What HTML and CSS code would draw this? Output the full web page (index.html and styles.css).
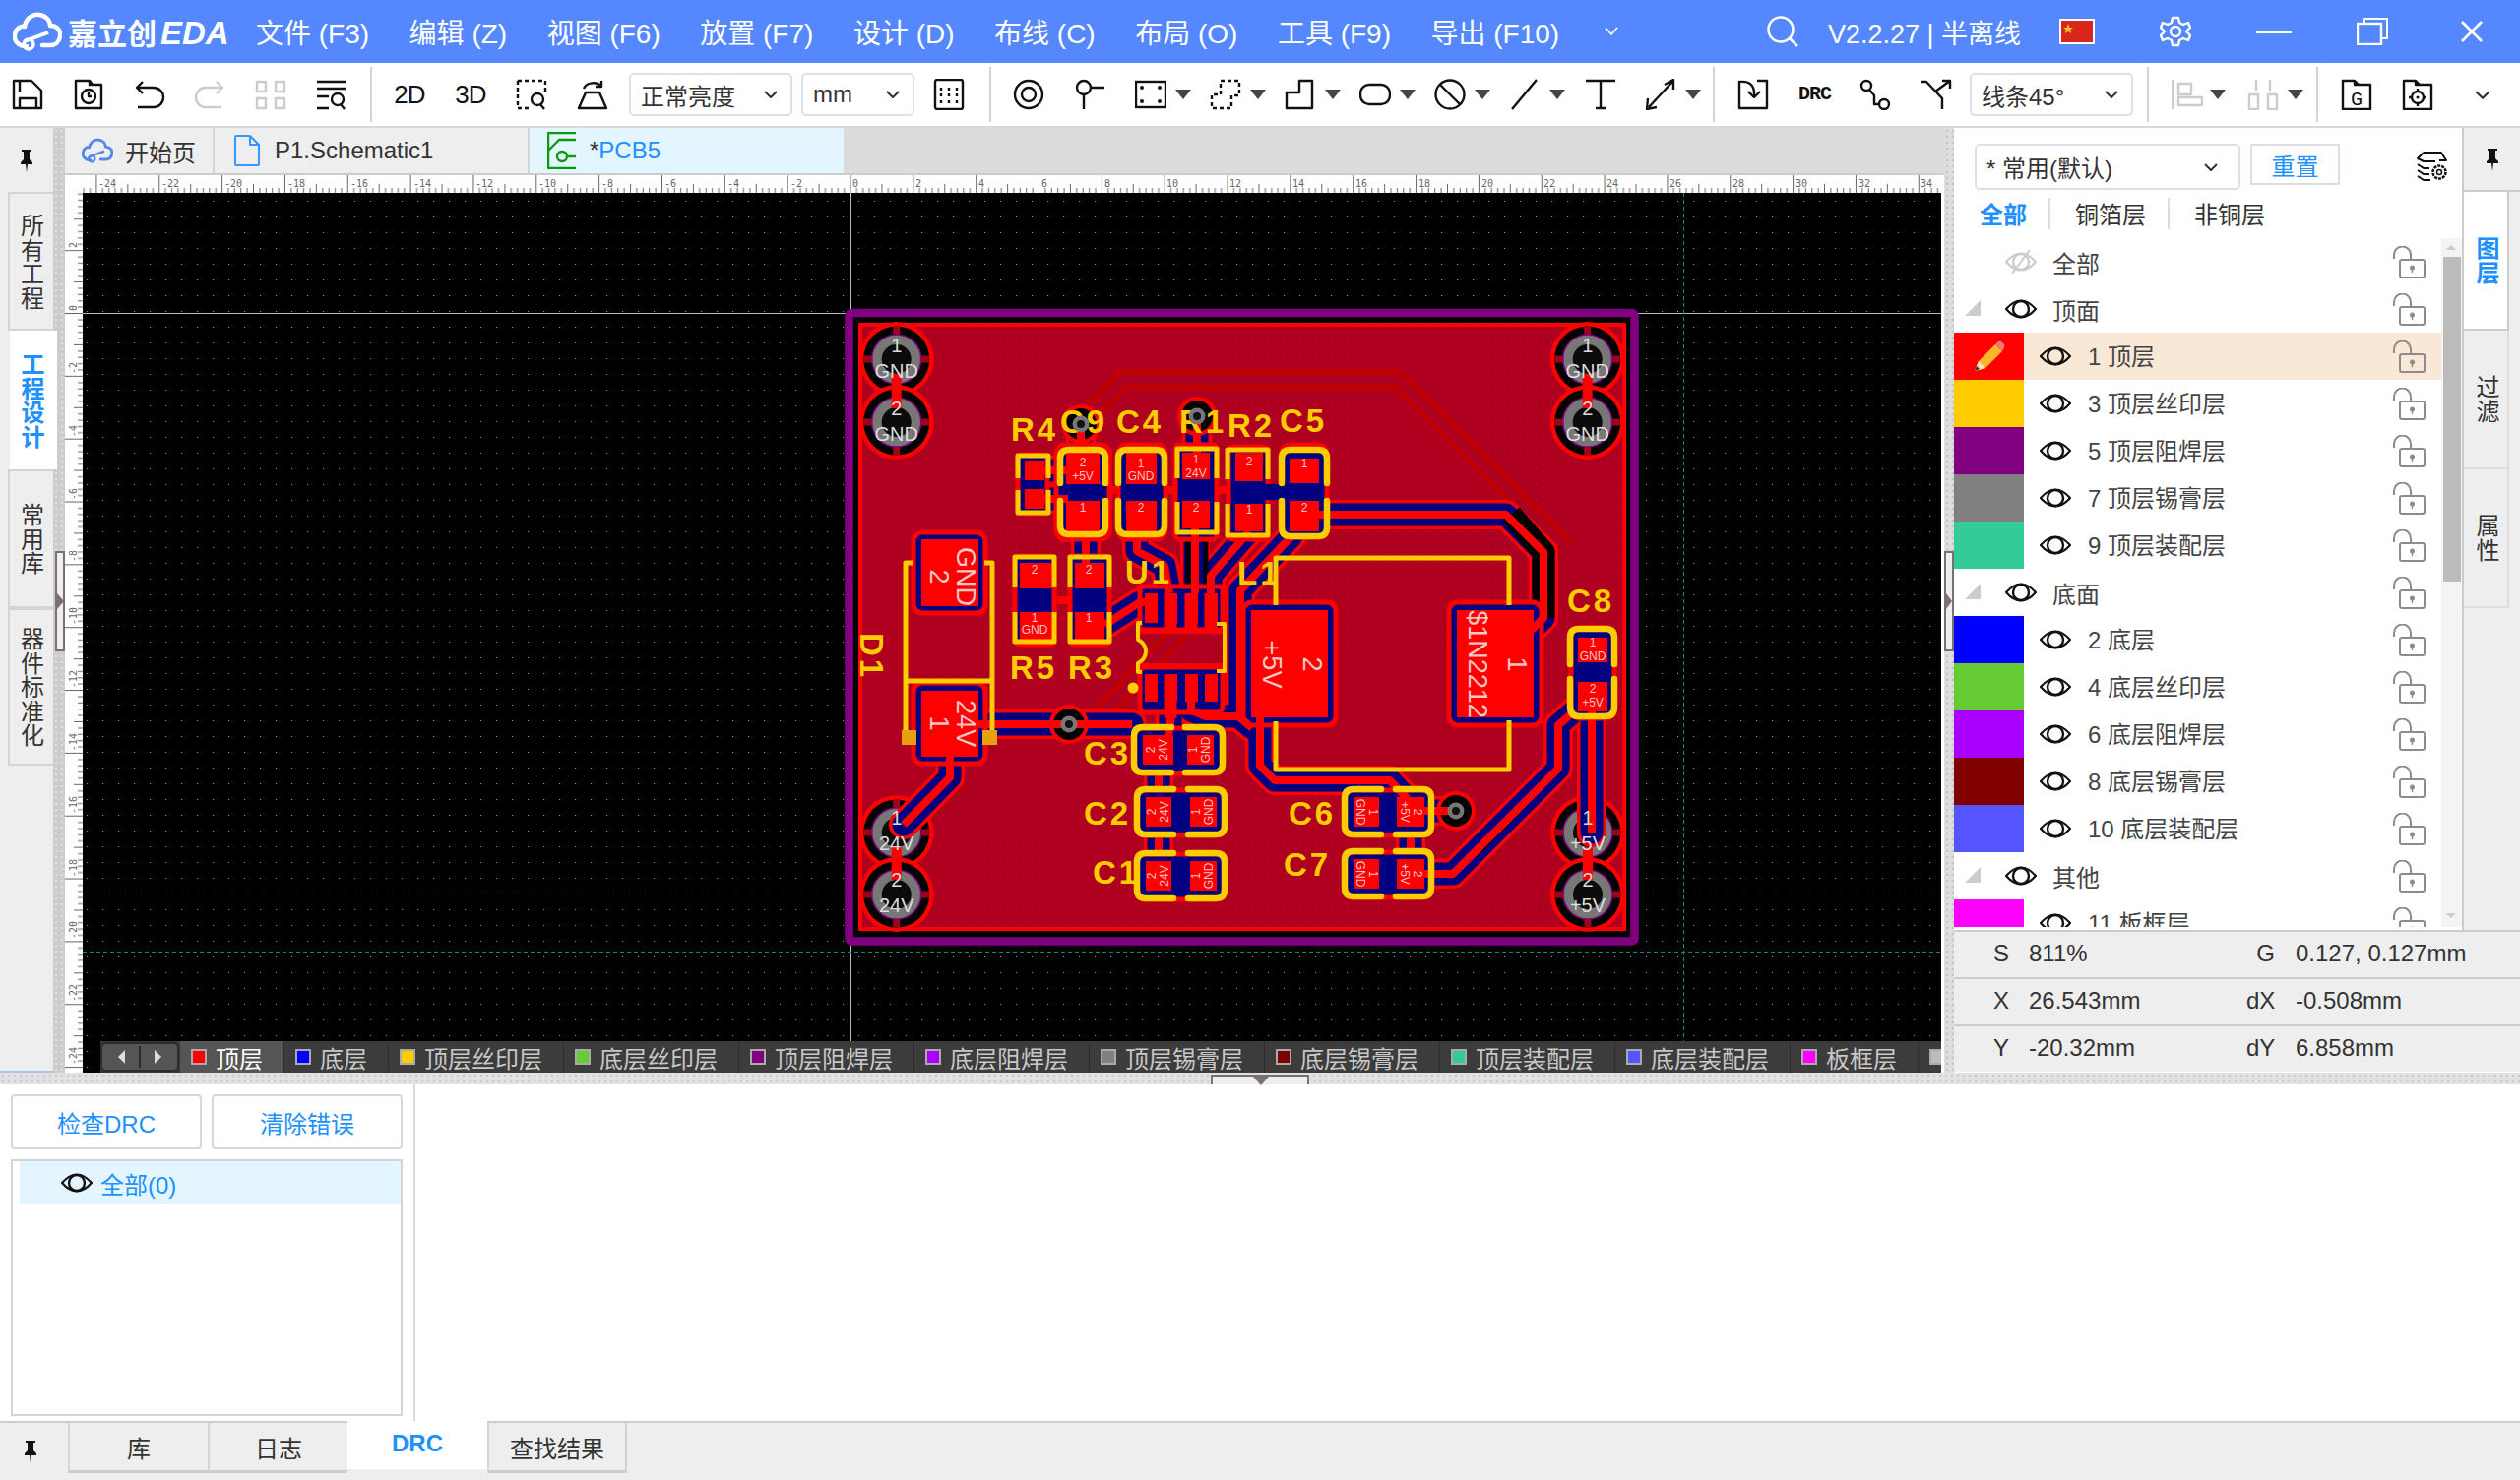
FILE: index.html
```html
<!DOCTYPE html>
<html lang="zh-CN">
<head>
<meta charset="utf-8">
<title>嘉立创EDA</title>
<link rel="stylesheet" href="styles.css">
</head>
<body>
<svg class="defs" width="0" height="0" aria-hidden="true">
  <symbol id="cloud" viewBox="0 0 50 40"><path d="M14 35 C5 35 1 29 2 23 C3 17 8 14 12 15 C13 7 20 2 27 3 C34 4 38 9 38 14 C45 14 49 19 48 25 C47 31 43 34 38 34 L30 34" fill="none" stroke="currentColor" stroke-width="4.5" stroke-linecap="round"/><path d="M12 30 L36 21" fill="none" stroke="currentColor" stroke-width="4"/><circle cx="16" cy="33" r="5" fill="none" stroke="currentColor" stroke-width="3.5"/></symbol>
  <symbol id="eye" viewBox="0 0 32 24"><path d="M1 12 Q16 -5 31 12 Q16 29 1 12Z" fill="none" stroke="currentColor" stroke-width="2.2"/><circle cx="16" cy="12" r="8" fill="none" stroke="currentColor" stroke-width="2.4"/></symbol>
  <symbol id="lock" viewBox="0 0 33 33"><path d="M1 13 V9 a8.500 8.500 0 0 1 17 0 V13" fill="none" stroke="#8c8c8c" stroke-width="2"/><rect x="7" y="14" width="25" height="18" rx="2" fill="none" stroke="#8c8c8c" stroke-width="2"/><circle cx="19.500" cy="22" r="2.500" fill="#8c8c8c"/><path d="M19.500 22 V27" stroke="#8c8c8c" stroke-width="1.500"/></symbol>
  <symbol id="pin" viewBox="0 0 16 24"><path d="M3 1 H13 V3 H11 V11 L14 14 V16 H9 L8 24 L7 16 H2 V14 L5 11 V3 H3Z" fill="#111"/></symbol>
  <symbol id="chev" viewBox="0 0 16 10"><path d="M2 2 L8 8 L14 2" fill="none" stroke="#333" stroke-width="2"/></symbol>
</svg>

<header class="titlebar">
  <div class="logo">
    <svg class="logo-icon" viewBox="0 0 50 40"><use href="#cloud"/></svg>
    <span class="logo-text">嘉立创<i>EDA</i></span>
  </div>
  <nav class="menu">
    <span>文件 (F3)</span><span>编辑 (Z)</span><span>视图 (F6)</span><span>放置 (F7)</span><span>设计 (D)</span><span>布线 (C)</span><span>布局 (O)</span><span>工具 (F9)</span><span>导出 (F10)</span>
    <svg class="menu-more" viewBox="0 0 16 10"><path d="M2 1 L8 8 L14 1" fill="none" stroke="#fff" stroke-width="1.800"/></svg>
  </nav>
  <div class="title-right">
    <svg class="ti search" viewBox="0 0 34 34"><circle cx="15" cy="15" r="12.500" fill="none" stroke="#fff" stroke-width="2.500"/><path d="M24 24 L32 32" stroke="#fff" stroke-width="2.500"/></svg>
    <span class="version">V2.2.27 | 半离线</span>
    <svg class="flag" viewBox="0 0 36 26"><rect x="1" y="1" width="34" height="24" fill="#d9261c" stroke="#fff" stroke-width="2"/><path d="M9 5 L10.500 9 L14 9 L11 11.500 L12.500 15 L9 13 L5.500 15 L7 11.500 L4 9 L7.500 9Z" fill="#f4c430"/></svg>
    <svg class="ti gear" viewBox="0 0 32 32"><path d="M13 2 H19 L20 7 L24 9 L29 7 L31 12 L27 16 L31 20 L29 25 L24 23 L20 25 L19 30 H13 L12 25 L8 23 L3 25 L1 20 L5 16 L1 12 L3 7 L8 9 L12 7Z" fill="none" stroke="#fff" stroke-width="2.400" stroke-linejoin="round"/><circle cx="16" cy="16" r="5" fill="none" stroke="#fff" stroke-width="2.400"/></svg>
    <span class="win-min"></span>
    <svg class="ti win-max" viewBox="0 0 32 28"><path d="M8 6 V1 H31 V21 H25" fill="none" stroke="#fff" stroke-width="2"/><rect x="1" y="6" width="24" height="21" fill="none" stroke="#fff" stroke-width="2.400"/></svg>
    <svg class="ti win-close" viewBox="0 0 22 22"><path d="M1 1 L21 21 M21 1 L1 21" stroke="#fff" stroke-width="2.600"/></svg>
  </div>
</header>

<div class="toolbar">
  <div class="tg g1">
    <svg class="ic" viewBox="0 0 32 32"><path d="M2 2 H20 L30 12 V30 H2Z M8 30 V20 H25 V30 M8 2 V13" class="ln"/></svg>
    <svg class="ic" viewBox="0 0 32 32"><path d="M3 2 H17 L20 6 H29 V30 H3Z M17 2 V6 H20" class="ln"/><circle cx="16" cy="18" r="7" class="ln"/><path d="M16 13 V18 H19" class="ln"/></svg>
    <svg class="ic" viewBox="0 0 32 32"><path d="M3 9 H20 A10 10 0 0 1 20 29 H4 M9 3 L3 9 L9 15" class="ln"/></svg>
    <svg class="ic" viewBox="0 0 32 32"><path d="M29 9 H12 A10 10 0 0 0 12 29 H28 M23 3 L29 9 L23 15" class="ln gr"/></svg>
    <svg class="ic" viewBox="0 0 32 32"><path d="M2 3 H11 V13 H2Z M21 3 H30 V13 H21Z M2 20 H11 V30 H2Z M21 20 H30 V30 H21Z" class="ln gr"/></svg>
    <svg class="ic" viewBox="0 0 32 32"><path d="M1 3 H31 M1 10 H31 M1 18 H13 M1 30 H13" class="ln"/><circle cx="22" cy="21" r="6" class="ln"/><path d="M25 26 L29 31" class="ln"/></svg>
  </div>
  <span class="sep s1"></span>
  <div class="tg g2">
    <span class="ic tx">2D</span>
    <span class="ic tx">3D</span>
    <svg class="ic" viewBox="0 0 32 32"><path d="M2 2 H30 V14 M2 2 V30 H14" class="ln dash"/><circle cx="22" cy="21" r="6" class="ln"/><path d="M25 26 L29 31" class="ln"/></svg>
    <svg class="ic" viewBox="0 0 32 32"><path d="M9 14 H23 L30 30 H2Z" class="ln"/><path d="M7 10 A10 8 0 0 1 25 8 M25 2 V8 H19" class="ln"/></svg>
  </div>
  <div class="sel sel-bright"><span>正常亮度</span><svg class="chev"><use href="#chev"/></svg></div>
  <div class="sel sel-unit"><span>mm</span><svg class="chev"><use href="#chev"/></svg></div>
  <svg class="ic m-grid" viewBox="0 0 32 32"><rect x="2" y="1" width="28" height="30" rx="2" class="ln"/><path d="M8 9 V12 M16 9 V12 M24 9 V12 M8 15 V18 M16 15 V18 M24 15 V18 M8 22 V25 M16 22 V25 M24 22 V25" class="ln"/></svg>
  <span class="sep s2"></span>
  <svg class="ic m-ring" viewBox="0 0 32 32"><circle cx="16" cy="16" r="14" class="ln"/><circle cx="16" cy="16" r="7" class="ln"/></svg>
  <svg class="ic m-probe" viewBox="0 0 32 32"><circle cx="9" cy="9" r="7" class="ln"/><path d="M16 9 H30 M9 16 V31" class="ln"/></svg>
  <div class="drop m-pad"><svg class="ic" viewBox="0 0 32 32"><rect x="1" y="3" width="30" height="26" class="ln"/><circle cx="7" cy="9" r="2"/><circle cx="25" cy="9" r="2"/><circle cx="7" cy="23" r="2"/><circle cx="25" cy="23" r="2"/></svg><span class="tri"></span></div>
  <div class="drop"><svg class="ic" viewBox="0 0 32 32"><path d="M11 2 H30 V17 H22 V30 H2 V16 H11Z" class="ln dash"/></svg><span class="tri"></span></div>
  <div class="drop"><svg class="ic" viewBox="0 0 32 32"><path d="M15 2 H28 V30 H2 V14 H15Z" class="ln"/></svg><span class="tri"></span></div>
  <div class="drop"><svg class="ic" viewBox="0 0 32 32"><rect x="1" y="6" width="30" height="20" rx="9" class="ln"/></svg><span class="tri"></span></div>
  <div class="drop"><svg class="ic" viewBox="0 0 32 32"><circle cx="16" cy="16" r="14.500" class="ln"/><path d="M6 6 L26 26" class="ln"/></svg><span class="tri"></span></div>
  <div class="drop"><svg class="ic" viewBox="0 0 32 32"><path d="M3 31 L28 1" class="ln"/></svg><span class="tri"></span></div>
  <svg class="ic m-text" viewBox="0 0 32 32"><path d="M1 2 H31 M16 2 V30 M11 30 H21" class="ln"/></svg>
  <div class="drop m-measure"><svg class="ic" viewBox="0 0 32 32"><path d="M4 29 L28 3 M20 6 L29 1 L29 11 M3 20 L2 31 L12 29" class="ln"/></svg><span class="tri"></span></div>
  <span class="sep s3"></span>
  <div class="tg g3">
    <svg class="ic" viewBox="0 0 32 32"><path d="M20 2 H30 V30 H2 V2" class="ln"/><path d="M2 3 C12 2 18 6 17 18 M11 13 L17 19 L23 13" class="ln"/></svg>
    <span class="ic tx tx-drc">DRC</span>
    <svg class="ic" viewBox="0 0 32 32"><circle cx="7" cy="7" r="5" class="ln"/><circle cx="25" cy="26" r="5" class="ln"/><path d="M10 11 L15 17 V26 H20" class="ln"/></svg>
    <svg class="ic" viewBox="0 0 32 32"><path d="M1 3 H6 L22 20 V31 M15 13 L30 2 M22 2 H30 V10" class="ln"/></svg>
  </div>
  <div class="sel sel-line"><span>线条45°</span><svg class="chev"><use href="#chev"/></svg></div>
  <span class="sep s4"></span>
  <div class="drop m-align"><svg class="ic" viewBox="0 0 32 32"><path d="M1 1 V31 M7 5 H20 V16 H7Z M7 19 H31 V27 H7Z" class="ln gr"/></svg><span class="tri tri-a"></span></div>
  <div class="drop m-dist"><svg class="ic" viewBox="0 0 32 32"><path d="M9 1 V12 M23 1 V12 M2 16 H11 V31 H2Z M21 16 H30 V31 H21Z" class="ln gr"/></svg><span class="tri"></span></div>
  <span class="sep s5"></span>
  <svg class="ic m-g" viewBox="0 0 32 32"><path d="M2 2 H14 L18 6 H30 V31 H2Z M14 2 V6 H18" class="ln"/><text x="16" y="27" class="icon-g">G</text></svg>
  <svg class="ic m-t" viewBox="0 0 32 32"><path d="M2 2 H14 L18 6 H30 V31 H2Z M14 2 V6 H18" class="ln"/><circle cx="16" cy="19" r="6" class="ln"/><circle cx="16" cy="19" r="1.500"/><path d="M16 10 V13 M16 25 V28 M7 19 H10 M22 19 H25" class="ln"/></svg>
  <svg class="end-chev" viewBox="0 0 16 10"><use href="#chev"/></svg>
</div>

<main class="main">
  <aside class="side">
    <div class="side-pin"><svg class="pin"><use href="#pin"/></svg></div>
    <div class="vtab">所有工程</div>
    <div class="vtab on">工程设计</div>
    <div class="vtab">常用库</div>
    <div class="vtab last">器件标准化</div>
  </aside>
  <div class="vsplit"><span class="handle"><i class="arrow-r"></i></span></div>

  <section class="center">
    <div class="tabs">
      <div class="tab t1"><svg class="tab-cloud" viewBox="0 0 50 40"><use href="#cloud"/></svg><span>开始页</span></div>
      <div class="tab t2"><svg class="tab-ic" viewBox="0 0 26 32"><path d="M2 1 H16 L25 10 V30 a1 1 0 0 1 -1 1 H2 a1 1 0 0 1 -1 -1 V2 a1 1 0 0 1 1 -1Z M16 1 V10 H25" fill="none" stroke="#3399ff" stroke-width="2"/></svg><span>P1.Schematic1</span></div>
      <div class="tab t3"><svg class="tab-ic2" viewBox="0 0 30 38"><path d="M29 1 H1 V37 H29 M1 19 L12 8 H29" fill="none" stroke="#0a9a0a" stroke-width="2.400"/><circle cx="15" cy="25" r="5" fill="none" stroke="#0a9a0a" stroke-width="2.400"/><path d="M20 25 H29" stroke="#0a9a0a" stroke-width="2.400"/></svg><span><b>*</b>PCB5</span></div>
    </div>
    <div class="canvas">
      <svg class="board" width="1906" height="912" viewBox="66 178 1906 912">
        <defs>
          <pattern id="rt" x="863.500" y="178" width="63.840" height="18" patternUnits="userSpaceOnUse">
            <path d="M.5 0 V18 M6.880 13 V18 M13.270 13 V18 M19.650 13 V18 M26.040 13 V18 M32.420 9 V18 M38.800 13 V18 M45.190 13 V18 M51.570 13 V18 M57.960 13 V18" stroke="#666" fill="none"/>
          </pattern>
          <pattern id="rl" x="66" y="318" width="18" height="63.840" patternUnits="userSpaceOnUse">
            <path d="M0 .5 H18 M13 6.880 H18 M13 13.270 H18 M13 19.650 H18 M13 26.040 H18 M9 32.420 H18 M13 38.800 H18 M13 45.190 H18 M13 51.570 H18 M13 57.960 H18" stroke="#666" fill="none"/>
          </pattern>
          <pattern id="dots" x="88" y="204" width="16" height="16" patternUnits="userSpaceOnUse"><rect width="1" height="1" fill="#9a9a9a"/></pattern>
          <g id="hole">
            <circle r="38" fill="#f00"/><circle r="33.500" fill="#000"/>
            <path d="M-33 0 H33 M0 -33 V33" stroke="#a00018" stroke-width="7"/>
            <circle r="25" fill="#777" stroke="#800080" stroke-width="1.500"/><circle r="15" fill="#0b0b0b"/>
          </g>
          <g id="via"><circle r="20" fill="#f00"/><circle r="16" fill="#000"/></g>
          <g id="viatop"><circle r="8.500" fill="#777"/><circle r="4" fill="#111"/></g>
          <path id="t1" d="M1340 523 H1530 L1568 561 V628 L1556 640"/>
          <path id="t2" d="M1447 888 H1476 L1583 781 V737 L1600 722"/>
          <path id="t3" d="M1617 723 V846"/>
          <path id="t4" d="M1447 824 H1479"/>
          <path id="t5" d="M1433 851 V862"/>
          <path id="t6" d="M1280 729 V778 L1295 793 H1412 L1430 812"/>
          <path id="t7" d="M965 768 V790 L918 838"/>
          <path id="t8" d="M994 736 H1150"/>
          <path id="t9" d="M1122 635 L1130 630 L1158 612 H1170"/>
          <path id="t10" d="M1098 431 V460"/>
          <path id="t11" d="M1216 423 V460"/>
          <path id="t12" d="M1214 537 V603"/>
          <path id="t13" d="M1155 541 V560 L1183 575 L1188 603"/>
          <path id="t14" d="M1269 540 L1230 585 V603"/>
          <path id="t15" d="M1312 545 L1260 600 V725"/>
          <path id="t16" d="M1103 541 V572"/>
          <path id="t17" d="M1189 713 V740 L1185 752"/>
          <path id="t18" d="M1210 713 V722 L1225 728 H1258 L1272 740"/>
          <path id="t19" d="M1177 788 V799 M1177 851 V864"/>
          <path id="t20" d="M1061 478 H1083 M1061 507 H1085"/>
          <g id="tracks">
            <use href="#t1"/><use href="#t2"/><use href="#t3"/><use href="#t4"/><use href="#t5"/><use href="#t6"/><use href="#t7"/><use href="#t8"/><use href="#t9"/><use href="#t10"/><use href="#t11"/><use href="#t12"/><use href="#t13"/><use href="#t14"/><use href="#t15"/><use href="#t16"/><use href="#t17"/><use href="#t18"/><use href="#t19"/><use href="#t20"/>
          </g>
        </defs>

        <rect x="66" y="178" width="1906" height="912" fill="#fff"/>
        <rect x="84" y="178" width="1888" height="18" fill="url(#rt)"/>
        <rect x="66" y="196" width="18" height="894" fill="url(#rl)"/>
        <g class="ruler">
          <text x="100" y="190">-24</text><text x="164" y="190">-22</text><text x="228" y="190">-20</text><text x="292" y="190">-18</text><text x="356" y="190">-16</text><text x="420" y="190">-14</text><text x="483" y="190">-12</text><text x="547" y="190">-10</text><text x="611" y="190">-8</text><text x="675" y="190">-6</text><text x="739" y="190">-4</text><text x="803" y="190">-2</text><text x="866" y="190">0</text><text x="930" y="190">2</text><text x="994" y="190">4</text><text x="1058" y="190">6</text><text x="1122" y="190">8</text><text x="1185" y="190">10</text><text x="1249" y="190">12</text><text x="1313" y="190">14</text><text x="1377" y="190">16</text><text x="1441" y="190">18</text><text x="1505" y="190">20</text><text x="1568" y="190">22</text><text x="1632" y="190">24</text><text x="1696" y="190">26</text><text x="1760" y="190">28</text><text x="1824" y="190">30</text><text x="1888" y="190">32</text><text x="1951" y="190">34</text>
          <text transform="rotate(-90 78 252)" x="78" y="252">2</text><text transform="rotate(-90 78 316)" x="78" y="316">0</text><text transform="rotate(-90 78 380)" x="78" y="380">-2</text><text transform="rotate(-90 78 444)" x="78" y="444">-4</text><text transform="rotate(-90 78 508)" x="78" y="508">-6</text><text transform="rotate(-90 78 571)" x="78" y="571">-8</text><text transform="rotate(-90 78 635)" x="78" y="635">-10</text><text transform="rotate(-90 78 699)" x="78" y="699">-12</text><text transform="rotate(-90 78 763)" x="78" y="763">-14</text><text transform="rotate(-90 78 827)" x="78" y="827">-16</text><text transform="rotate(-90 78 891)" x="78" y="891">-18</text><text transform="rotate(-90 78 954)" x="78" y="954">-20</text><text transform="rotate(-90 78 1018)" x="78" y="1018">-22</text><text transform="rotate(-90 78 1082)" x="78" y="1082">-24</text>
        </g>
        <rect x="84" y="196" width="1888" height="894" fill="#000"/>
        <rect x="84" y="196" width="1888" height="894" fill="url(#dots)"/>
        <path d="M84 318.500 H1972 M864.500 196 V1058" stroke="#bbb" fill="none"/>
        <path d="M84 967.500 H1972 M1710.500 196 V1058" stroke="#0c8a8a" stroke-dasharray="4 3" fill="none"/>

        <rect x="862.500" y="318" width="798" height="638.500" rx="3" fill="#000" stroke="#800080" stroke-width="8.500"/>
        <rect x="874" y="330" width="776" height="614" fill="#b0001f" stroke="#f00" stroke-width="4"/>
        <rect x="874" y="330" width="776" height="614" fill="url(#dots)" opacity=".25"/>

        <path class="bot" d="M1108 420 L1140 386 H1420 L1590 556"/>
        <path class="bot2" d="M1108 420 L1140 386 H1420 L1590 556"/>
        <path class="bot" d="M1110 735 L1200 640"/>
        <path class="bot2" d="M1110 735 L1200 640"/>

        <use href="#hole" x="910.700" y="365"/><use href="#hole" x="910.700" y="429"/><path class="bridge" d="M910.700 380 V415"/>
        <use href="#hole" x="1612.700" y="365"/><use href="#hole" x="1612.700" y="429"/><path class="bridge" d="M1612.700 380 V415"/>
        <use href="#hole" x="910.700" y="846"/><use href="#hole" x="910.700" y="909"/><path class="bridge" d="M910.700 861 V894"/>
        <use href="#hole" x="1613" y="846"/><use href="#hole" x="1613" y="909"/><path class="bridge" d="M1613 861 V894"/>

        <use href="#tracks" class="st-e"/>
        <use href="#tracks" class="st-n"/>
        <path class="st-k" d="M1535 523 L1568 561 V628"/>
        <path class="st-k2" d="M1500 868 L1575 790"/>
        <path class="st-k2" d="M1207 470 V600 M1225 470 V600"/>

        <g class="clusters">
          <rect x="1073" y="452" width="54" height="96" rx="9"/><rect x="1136" y="452" width="48" height="96" rx="9"/><rect x="1194" y="452" width="42" height="96" rx="4"/><rect x="1248" y="454" width="40" height="94" rx="4"/><rect x="1302" y="452" width="46" height="94" rx="9"/>
          <rect x="1034" y="462" width="30" height="60" rx="3"/><rect x="1031" y="565" width="40" height="90" rx="4"/><rect x="1087" y="565" width="40" height="90" rx="4"/>
          <rect x="1596" y="638" width="44" height="92" rx="9"/>
          <rect x="1152" y="740" width="90" height="46" rx="9"/><rect x="1155" y="803" width="89" height="46" rx="9"/><rect x="1155" y="868" width="89" height="46" rx="9"/><rect x="1366" y="803" width="88" height="46" rx="9"/><rect x="1366" y="866" width="88" height="46" rx="9"/>
          <rect x="928" y="541" width="73" height="82" rx="9"/><rect x="928" y="694" width="73" height="82" rx="9"/>
          <rect x="1263" y="612" width="94" height="125" rx="9"/><rect x="1472" y="612" width="94" height="125" rx="9"/>
          <rect x="1158" y="596" width="84" height="44"/><rect x="1158" y="678" width="84" height="46" rx="6"/>
        </g>
        <path class="navyband" d="M1254 500 H1345"/>
        <path class="cross" d="M1126 498 H1133 M1186 498 H1194 M1236 498 H1248 M1074 610 H1086"/>

        <use href="#tracks" class="st-t"/>
        <path class="st-big" d="M1189 640 V603 M1210 640 V603 M1230 640 V603 M1189 685 V730"/>

        <g class="pads">
          <rect x="1041" y="468" width="20" height="20"/><rect x="1041" y="497" width="20" height="20"/>
          <rect x="1083" y="460" width="34" height="32"/><rect x="1083" y="509" width="34" height="32"/>
          <rect x="1144" y="460" width="31" height="32"/><rect x="1144" y="509" width="31" height="32"/>
          <rect x="1201" y="460" width="28" height="27"/><rect x="1201" y="509" width="28" height="28"/>
          <rect x="1255" y="460" width="28" height="29"/><rect x="1255" y="512" width="28" height="28"/>
          <rect x="1310" y="466" width="30" height="25"/><rect x="1310" y="509" width="30" height="31"/>
          <rect x="1036" y="572" width="33" height="26"/><rect x="1036" y="622" width="33" height="28"/>
          <rect x="1092" y="572" width="30" height="26"/><rect x="1092" y="622" width="30" height="28"/>
          <rect x="1603" y="648" width="30" height="25"/><rect x="1603" y="693" width="30" height="30"/>
          <rect x="1161" y="747" width="31" height="30"/><rect x="1206" y="747" width="27" height="30"/>
          <rect x="1164" y="810" width="26" height="30"/><rect x="1209" y="810" width="27" height="30"/>
          <rect x="1164" y="875" width="26" height="30"/><rect x="1209" y="875" width="27" height="30"/>
          <rect x="1375" y="810" width="26" height="30"/><rect x="1419" y="810" width="28" height="30"/>
          <rect x="1375" y="873" width="26" height="30"/><rect x="1419" y="873" width="28" height="30"/>
          <rect x="936" y="548" width="58" height="68"/><rect x="936" y="702" width="58" height="67"/>
          <rect x="1271" y="620" width="78" height="109"/><rect x="1480" y="620" width="78" height="109"/>
          <rect x="1163" y="603" width="13" height="30"/><rect x="1183" y="603" width="13" height="30"/><rect x="1204" y="603" width="13" height="30"/><rect x="1224" y="603" width="13" height="30"/>
          <rect x="1163" y="685" width="13" height="28"/><rect x="1183" y="685" width="13" height="28"/><rect x="1204" y="685" width="13" height="28"/><rect x="1224" y="685" width="13" height="28"/>
        </g>
        <path class="bandline" d="M1157 642 H1245 M1157 676 H1245"/>

        <use href="#via" x="1098" y="431"/><use href="#via" x="1216" y="423"/><use href="#via" x="1086" y="736"/><use href="#via" x="1479" y="824"/>
        <path class="st-t2" d="M1098 431 V460 M1216 423 V460 M1086 736 H1150 M1086 736 H994 M1479 824 H1447"/>

        <g class="silk">
          <path d="M1077 491 V466 q0 -9 9 -9 H1114 q9 0 9 9 V491 M1077 509 V534 q0 9 9 9 H1114 q9 0 9 -9 V509"/>
          <path d="M1136 491 V466 q0 -9 9 -9 H1174 q9 0 9 9 V491 M1136 509 V534 q0 9 9 9 H1174 q9 0 9 -9 V509"/>
          <path d="M1302 491 V466 q0 -9 9 -9 H1339 q9 0 9 9 V491 M1302 509 V536 q0 9 9 9 H1339 q9 0 9 -9 V509"/>
          <path d="M1595 675 V648 q0 -9 9 -9 H1631 q9 0 9 9 V675 M1595 690 V718 q0 10 9 10 H1631 q9 0 9 -10 V690"/>
          <path d="M1190 739 H1161 q-9 0 -9 9 V776 q0 9 9 9 H1190 M1204 739 H1233 q9 0 9 9 V776 q0 9 -9 9 H1204"/>
          <path d="M1192 802 H1164 q-9 0 -9 9 V839 q0 9 9 9 H1192 M1207 802 H1235 q9 0 9 9 V839 q0 9 -9 9 H1207"/>
          <path d="M1192 867 H1164 q-9 0 -9 9 V904 q0 9 9 9 H1192 M1207 867 H1235 q9 0 9 9 V904 q0 9 -9 9 H1207"/>
          <path d="M1403 802 H1375 q-9 0 -9 9 V839 q0 9 9 9 H1403 M1418 802 H1445 q9 0 9 9 V839 q0 9 -9 9 H1418"/>
          <path d="M1403 865 H1375 q-9 0 -9 9 V902 q0 9 9 9 H1403 M1418 865 H1445 q9 0 9 9 V902 q0 9 -9 9 H1418"/>
        </g>
        <g class="silk thin">
          <path d="M1196 486 V456 H1236 V486 M1196 510 V541 H1236 V510"/>
          <path d="M1247 487 V457 H1288 V487 M1247 512 V544 H1288 V512"/>
          <path d="M1034 486 V463 H1065 V486 M1034 498 V521 H1065 V498"/>
          <path d="M1031 597 V566 H1071 V597 M1031 622 V652 H1071 V622"/>
          <path d="M1087 597 V566 H1127 V597 M1087 622 V652 H1127 V622"/>
          <path d="M928 572 H920 V750 M1000 572 H1008 V750 M920 692 H1008"/>
          <path d="M1296 615 V567 H1533 V615 M1533 732 V782 H1296 V733"/>
        </g>
        <path class="silk-u" d="M1160 633 H1156 V650 q8 4 8 12 q0 8 -8 12 V683 H1160 M1236 634 H1244 V682 H1236"/>
        <circle cx="1151" cy="699" r="5.500" fill="#ffcc00"/>
        <rect x="916" y="742" width="15" height="15" fill="#e8a010"/><rect x="998" y="742" width="15" height="15" fill="#e8a010"/>

        <g class="refdes">
          <text x="1027" y="448">R4</text><text x="1077" y="440">C9</text><text x="1134" y="440">C4</text><text x="1198" y="440">R1</text><text x="1247" y="444">R2</text><text x="1300" y="439">C5</text>
          <text x="1143" y="593">U1</text><text x="1257" y="594">L1</text><text x="1026" y="690">R5</text><text x="1085" y="690">R3</text>
          <text x="1592" y="622">C8</text><text x="1101" y="777">C3</text><text x="1101" y="838">C2</text><text x="1110" y="898">C1</text><text x="1309" y="838">C6</text><text x="1304" y="890">C7</text>
          <text transform="rotate(90 874 643)" x="874" y="643">D1</text>
        </g>

        <g class="holetext">
          <text x="910.700" y="358">1</text><text x="910.700" y="384">GND</text><text x="910.700" y="422">2</text><text x="910.700" y="448">GND</text>
          <text x="1612.700" y="358">1</text><text x="1612.700" y="384">GND</text><text x="1612.700" y="422">2</text><text x="1612.700" y="448">GND</text>
          <text x="910.700" y="838">1</text><text x="910.700" y="864">24V</text><text x="910.700" y="901">2</text><text x="910.700" y="927">24V</text>
          <text x="1613" y="838">1</text><text x="1613" y="864">+5V</text><text x="1613" y="901">2</text><text x="1613" y="927">+5V</text>
        </g>

        <g class="padtext">
          <text x="1100" y="474">2</text><text x="1100" y="488">+5V</text><text x="1100" y="520">1</text>
          <text x="1159" y="475">1</text><text x="1159" y="488">GND</text><text x="1159" y="520">2</text>
          <text x="1215" y="471">1</text><text x="1215" y="485">24V</text><text x="1215" y="520">2</text>
          <text x="1269" y="473">2</text><text x="1269" y="522">1</text>
          <text x="1325" y="475">1</text><text x="1325" y="520">2</text>
          <text x="1051" y="583">2</text><text x="1051" y="632">1</text><text x="1051" y="644">GND</text>
          <text x="1106" y="583">2</text><text x="1106" y="632">1</text>
          <text x="1618" y="657">1</text><text x="1618" y="671">GND</text><text x="1618" y="704">2</text><text x="1618" y="718">+5V</text>
          <text transform="rotate(-90 1173 762)" x="1173" y="762">2</text><text transform="rotate(-90 1186 762)" x="1186" y="762">24V</text>
          <text transform="rotate(-90 1216 762)" x="1216" y="762">1</text><text transform="rotate(-90 1229 762)" x="1229" y="762">GND</text>
          <text transform="rotate(-90 1174 825)" x="1174" y="825">2</text><text transform="rotate(-90 1187 825)" x="1187" y="825">24V</text>
          <text transform="rotate(-90 1219 825)" x="1219" y="825">1</text><text transform="rotate(-90 1232 825)" x="1232" y="825">GND</text>
          <text transform="rotate(-90 1174 890)" x="1174" y="890">2</text><text transform="rotate(-90 1187 890)" x="1187" y="890">24V</text>
          <text transform="rotate(-90 1219 890)" x="1219" y="890">1</text><text transform="rotate(-90 1232 890)" x="1232" y="890">GND</text>
          <text transform="rotate(90 1378 825)" x="1378" y="825">GND</text><text transform="rotate(90 1391 825)" x="1391" y="825">1</text>
          <text transform="rotate(90 1423 825)" x="1423" y="825">+5V</text><text transform="rotate(90 1436 825)" x="1436" y="825">2</text>
          <text transform="rotate(90 1378 888)" x="1378" y="888">GND</text><text transform="rotate(90 1391 888)" x="1391" y="888">1</text>
          <text transform="rotate(90 1423 888)" x="1423" y="888">+5V</text><text transform="rotate(90 1436 888)" x="1436" y="888">2</text>
        </g>
        <g class="padtext big">
          <text transform="rotate(90 945 586)" x="945" y="586">2</text><text transform="rotate(90 972 586)" x="972" y="586">GND</text>
          <text transform="rotate(90 945 735)" x="945" y="735">1</text><text transform="rotate(90 972 735)" x="972" y="735">24V</text>
          <text transform="rotate(90 1324 675)" x="1324" y="675">2</text><text transform="rotate(90 1283 675)" x="1283" y="675">+5V</text>
          <text transform="rotate(90 1532 675)" x="1532" y="675">1</text><text transform="rotate(90 1492 675)" x="1492" y="675">$1N2212</text>
        </g>

        <use href="#viatop" x="1098" y="431"/><use href="#viatop" x="1216" y="423"/><use href="#viatop" x="1086" y="736"/><use href="#viatop" x="1479" y="824"/>
      </svg>
      <div class="layerbar">
        <div class="nav"><i class="nl"></i><i class="nr"></i></div>
        <div class="lt on"><i class="c-top"></i>顶层</div>
        <div class="lt"><i class="c-bot"></i>底层</div>
        <div class="lt"><i class="c-ts"></i>顶层丝印层</div>
        <div class="lt"><i class="c-bs"></i>底层丝印层</div>
        <div class="lt"><i class="c-tm"></i>顶层阻焊层</div>
        <div class="lt"><i class="c-bm"></i>底层阻焊层</div>
        <div class="lt"><i class="c-tp"></i>顶层锡膏层</div>
        <div class="lt"><i class="c-bp"></i>底层锡膏层</div>
        <div class="lt"><i class="c-ta"></i>顶层装配层</div>
        <div class="lt"><i class="c-ba"></i>底层装配层</div>
        <div class="lt"><i class="c-bo"></i>板框层</div>
        <div class="lt"><i class="c-more"></i></div>
      </div>
    </div>
  </section>
  <div class="vsplit narrow"><span class="handle hr"><i class="arrow-l"></i></span></div>

  <aside class="right">
    <div class="right-top">
      <div class="lp">
        <div class="lp-head">
          <div class="sel sel-set"><span>* 常用(默认)</span><svg class="chev"><use href="#chev"/></svg></div>
          <button class="reset">重置</button>
          <svg class="lp-gear" viewBox="0 0 32 32"><path d="M8 2 H26 L31 10 H24 M8 2 L2 8 L8 11 H20 M2 14 L8 18 H14 M2 20 L8 24 H14 M2 26 L8 30 H15" fill="none" stroke="#111" stroke-width="2"/><circle cx="24" cy="22" r="6.500" fill="none" stroke="#111" stroke-width="2.500" stroke-dasharray="3 1"/><circle cx="24" cy="22" r="2.500" fill="none" stroke="#111" stroke-width="1.500"/></svg>
        </div>
        <div class="lp-filter"><b>全部</b><i></i><span>铜箔层</span><i></i><span>非铜层</span></div>
        <div class="lp-listwrap">
          <div class="layers">
            <div class="row grp"><span class="notri"></span><svg class="eye off" viewBox="0 0 32 24"><use href="#eye"/><path d="M7 24 L25 0" stroke="#ccc" stroke-width="2"/></svg><span>全部</span><svg class="lock"><use href="#lock"/></svg></div>
            <div class="row grp"><span class="tri-g"></span><svg class="eye" viewBox="0 0 32 24"><use href="#eye"/></svg><span>顶面</span><svg class="lock"><use href="#lock"/></svg></div>
            <div class="row act"><span class="sw c-top"><svg class="pencil" viewBox="0 0 32 32"><path d="M1 31 L5 21 L22 4 L29 11 L12 28Z" fill="#ffb52e"/><path d="M1 31 L5 21 L12 28Z" fill="#f6e2b6"/><path d="M1 31 L3 26 L6 29Z" fill="#333"/><path d="M22 4 L25 1 Q28 0 31 4 Q32 6 29 11Z" fill="#e97a7a"/></svg></span><svg class="eye" viewBox="0 0 32 24"><use href="#eye"/></svg><span class="nm">1 顶层</span><svg class="lock"><use href="#lock"/></svg></div>
            <div class="row"><span class="sw c-ts"></span><svg class="eye" viewBox="0 0 32 24"><use href="#eye"/></svg><span class="nm">3 顶层丝印层</span><svg class="lock"><use href="#lock"/></svg></div>
            <div class="row"><span class="sw c-tm"></span><svg class="eye" viewBox="0 0 32 24"><use href="#eye"/></svg><span class="nm">5 顶层阻焊层</span><svg class="lock"><use href="#lock"/></svg></div>
            <div class="row"><span class="sw c-tp"></span><svg class="eye" viewBox="0 0 32 24"><use href="#eye"/></svg><span class="nm">7 顶层锡膏层</span><svg class="lock"><use href="#lock"/></svg></div>
            <div class="row"><span class="sw c-ta"></span><svg class="eye" viewBox="0 0 32 24"><use href="#eye"/></svg><span class="nm">9 顶层装配层</span><svg class="lock"><use href="#lock"/></svg></div>
            <div class="row grp"><span class="tri-g"></span><svg class="eye" viewBox="0 0 32 24"><use href="#eye"/></svg><span>底面</span><svg class="lock"><use href="#lock"/></svg></div>
            <div class="row"><span class="sw c-bot"></span><svg class="eye" viewBox="0 0 32 24"><use href="#eye"/></svg><span class="nm">2 底层</span><svg class="lock"><use href="#lock"/></svg></div>
            <div class="row"><span class="sw c-bs"></span><svg class="eye" viewBox="0 0 32 24"><use href="#eye"/></svg><span class="nm">4 底层丝印层</span><svg class="lock"><use href="#lock"/></svg></div>
            <div class="row"><span class="sw c-bm"></span><svg class="eye" viewBox="0 0 32 24"><use href="#eye"/></svg><span class="nm">6 底层阻焊层</span><svg class="lock"><use href="#lock"/></svg></div>
            <div class="row"><span class="sw c-bp"></span><svg class="eye" viewBox="0 0 32 24"><use href="#eye"/></svg><span class="nm">8 底层锡膏层</span><svg class="lock"><use href="#lock"/></svg></div>
            <div class="row"><span class="sw c-ba"></span><svg class="eye" viewBox="0 0 32 24"><use href="#eye"/></svg><span class="nm">10 底层装配层</span><svg class="lock"><use href="#lock"/></svg></div>
            <div class="row grp"><span class="tri-g"></span><svg class="eye" viewBox="0 0 32 24"><use href="#eye"/></svg><span>其他</span><svg class="lock"><use href="#lock"/></svg></div>
            <div class="row"><span class="sw c-bo"></span><svg class="eye" viewBox="0 0 32 24"><use href="#eye"/></svg><span class="nm">11 板框层</span><svg class="lock"><use href="#lock"/></svg></div>
          </div>
          <div class="scroll"><i class="up"></i><span class="thumb"></span><i class="down"></i></div>
        </div>
      </div>
      <div class="rtabs">
        <div class="rpin"><svg class="pin"><use href="#pin"/></svg></div>
        <div class="rtab on">图层</div>
        <div class="rtab">过滤</div>
        <div class="rtab">属性</div>
      </div>
    </div>
    <div class="status">
      <div class="st"><span class="k">S</span><span class="v">811%</span><span class="k2">G</span><span>0.127, 0.127mm</span></div>
      <div class="st"><span class="k">X</span><span class="v">26.543mm</span><span class="k2">dX</span><span>-0.508mm</span></div>
      <div class="st"><span class="k">Y</span><span class="v">-20.32mm</span><span class="k2">dY</span><span>6.858mm</span></div>
    </div>
  </aside>
</main>

<div class="hsplit"><span class="hhandle"><i></i></span></div>

<section class="bottom">
  <div class="drcpanel">
    <div class="drc-btns"><button>检查DRC</button><button>清除错误</button></div>
    <div class="drc-list"><div class="drc-row"><svg class="eye small" viewBox="0 0 32 24"><use href="#eye"/></svg><span>全部(0)</span></div></div>
  </div>
</section>

<footer class="foot">
  <div class="foot-pin"><svg class="pin"><use href="#pin"/></svg></div>
  <div class="ft">库</div>
  <div class="ft">日志</div>
  <div class="ft on">DRC</div>
  <div class="ft">查找结果</div>
</footer>
</body>
</html>
```

FILE: styles.css
```css
* { box-sizing: border-box; }
html, body { margin: 0; padding: 0; }
body {
  width: 2560px; height: 1504px; overflow: hidden; position: relative;
  display: flex; flex-direction: column; background: #fff; color: #333;
  font-family: "Liberation Sans", "Noto Sans CJK SC", sans-serif; font-size: 24px;
}
.defs { position: absolute; }

/* title bar */
.titlebar { height: 64px; flex: none; background: #5588ff; color: #fff; display: flex; align-items: center; position: relative; }
.logo { width: 260px; display: flex; align-items: center; padding-left: 13px; flex: none; }
.logo-icon { width: 50px; height: 40px; color: #fff; flex: none; }
.logo-text { margin-left: 6px; font-size: 30px; font-weight: 700; white-space: nowrap; }
.logo-text i { font-style: italic; margin-left: 4px; font-size: 33px; }
.menu { display: flex; align-items: center; gap: 40.500px; font-size: 28px; white-space: nowrap; }
.menu-more { width: 16px; height: 10px; margin-left: 4px; }
.title-right { position: absolute; right: 0; top: 0; height: 64px; left: 1794px; display: flex; align-items: center; }
.ti { flex: none; }
.search { width: 34px; height: 34px; }
.version { margin-left: 29px; font-size: 27px; white-space: nowrap; width: 235px; }
.flag { width: 36px; height: 26px; flex: none; }
.gear { width: 32px; height: 32px; margin-left: 66px; }
.win-min { width: 36px; height: 3px; background: #fff; margin-left: 66px; flex: none; }
.win-max { width: 32px; height: 28px; margin-left: 66px; }
.win-close { width: 22px; height: 22px; margin-left: 74px; }

/* toolbar */
.toolbar { height: 66px; flex: none; background: #fff; border-bottom: 2px solid #d8d8d8; display: flex; align-items: center; padding-left: 12px; }
.ic { width: 32px; height: 32px; flex: none; fill: #111; }
.ln { fill: none; stroke: #111; stroke-width: 2.400; }
.gr { stroke: #ccc; }
.dash { stroke-dasharray: 4 3; }
.tx { font-size: 26px; color: #111; line-height: 32px; text-align: center; letter-spacing: -1px; white-space: nowrap; }
.tx-drc { font-family: "Liberation Mono", monospace; font-weight: 700; font-size: 20px; }
.icon-g { font-size: 20px; text-anchor: middle; fill: #111; font-family: "Liberation Mono", monospace; }
.tg { display: flex; gap: 29.800px; flex: none; }
.sep { width: 2px; height: 56px; background: #d4d4d4; flex: none; }
.s1 { margin-left: 23px; }
.g2 { margin-left: 22px; gap: 30px; }
.sel {
  height: 44px; border: 2px solid #dde0e8; border-radius: 5px; background: #fff; display: flex; align-items: center;
  justify-content: space-between; padding: 0 12px 0 10px; flex: none; color: #333; white-space: nowrap;
}
.chev { width: 16px; height: 10px; flex: none; }
.sel-bright { width: 166px; margin-left: 21px; }
.sel-unit { width: 115px; margin-left: 9px; }
.m-grid { margin-left: 19px; }
.s2 { margin-left: 25px; }
.m-ring { margin-left: 22px; }
.m-probe { margin-left: 31px; }
.drop { display: flex; align-items: center; margin-left: 19px; flex: none; }
.m-pad { margin-left: 29px; }
.tri { width: 0; height: 0; border-left: 8px solid transparent; border-right: 8px solid transparent; border-top: 10px solid #444; margin-left: 9px; }
.m-text { margin-left: 20px; }
.m-measure { margin-left: 29px; }
.s3 { margin-left: 12px; }
.g3 { margin-left: 23px; gap: 30px; }
.sel-line { width: 166px; margin-left: 18px; }
.s4 { margin-left: 14px; }
.m-align { margin-left: 23px; }
.tri-a { margin-left: 7px; }
.m-dist { margin-left: 22px; }
.s5 { margin-left: 13px; }
.m-g { margin-left: 23px; }
.m-t { margin-left: 30px; }
.end-chev { width: 18px; height: 11px; margin-left: 41px; flex: none; }

/* main */
.main { height: 960px; flex: none; display: flex; background: #fff; }
.side { width: 54px; flex: none; background: #eee; position: relative; display: flex; flex-direction: column; border-bottom: 2px solid #a8c4e8; }
.side-pin { height: 65px; display: flex; align-items: center; justify-content: center; }
.pin { width: 16px; height: 24px; }
.vtab {
  width: 46px; margin-left: 8px; height: 141px; border: 2px solid #d4d4d4; border-right: 0;
  writing-mode: vertical-rl; display: flex; align-items: center; justify-content: center;
  padding-right: 3px; line-height: 40px; letter-spacing: .5px; color: #333;
}
.vtab.on { width: 48px; margin-left: 10px; background: #fff; color: #2090ff; font-weight: 700; border: 0; position: relative; z-index: 2; padding-right: 6px; }
.vtab.last { height: 160px; }
.vsplit {
  width: 12px; flex: none; position: relative; background-color: #ccc;
  background-image: radial-gradient(circle, #e2e2e2 1.200px, transparent 1.600px); background-size: 6px 6px;
}
.vsplit.narrow { width: 10px; background-color: #ddd; background-image: radial-gradient(circle, #c4c4c4 1.200px, transparent 1.600px); }
.handle { position: absolute; left: 2px; top: 430px; width: 10px; height: 102px; border: 2px solid #7c6f6f; background: #eee; display: flex; align-items: center; }
.handle.hr { left: 0; top: 430px; height: 102px; }
.arrow-r { width: 0; height: 0; border-top: 8px solid transparent; border-bottom: 8px solid transparent; border-left: 7px solid #7c6f6f; }
.arrow-l { width: 0; height: 0; border-top: 8px solid transparent; border-bottom: 8px solid transparent; border-left: 6px solid #7c6f6f; }

.center { width: 1909px; flex: none; display: flex; flex-direction: column; background: #fff; }
.tabs { height: 48px; flex: none; background: #dcdcdc; display: flex; border-bottom: 2px solid #ccc; }
.tab { height: 46px; background: #eee; display: flex; align-items: center; border-right: 2px solid #d4d4d4; flex: none; color: #333; }
.t1 { width: 152px; padding-left: 17px; }
.t2 { width: 320px; padding-left: 20px; }
.t3 { width: 319px; padding-left: 18px; background: #e3f5ff; color: #2090ff; border-right: 0; }
.t3 b { color: #333; font-weight: 400; }
.tab-cloud { width: 32px; height: 28px; color: #5588ee; margin-right: 12px; flex: none; }
.tab-ic { width: 26px; height: 34px; margin-right: 15px; flex: none; }
.tab-ic2 { width: 30px; height: 38px; margin-right: 13px; flex: none; }
.canvas { position: relative; width: 1909px; height: 912px; flex: none; }
.board { display: block; }
.ruler text { font-family: "DejaVu Sans Mono", monospace; font-size: 10px; fill: #666; }

/* pcb */
use, path { stroke-linejoin: round; }
.bot { fill: none; stroke: #c00000; stroke-width: 21; }
.bot2 { fill: none; stroke: #b0001f; stroke-width: 10; }
.bridge { stroke: #f00; stroke-width: 10; fill: none; }
.st-e { fill: none; stroke: #f00; stroke-width: 30; stroke-linecap: round; }
.st-n { fill: none; stroke: #000080; stroke-width: 23; stroke-linecap: round; }
.st-t { fill: none; stroke: #f00; stroke-width: 8; }
.st-t2 { fill: none; stroke: #f00; stroke-width: 8; }
.st-k { fill: none; stroke: #000; stroke-width: 23; }
.st-k2 { fill: none; stroke: #000; stroke-width: 5; }
.st-big { fill: none; stroke: #f00; stroke-width: 13; }
.clusters rect { fill: #000080; stroke: #f00; stroke-width: 5; }
.navyband { stroke: #000080; stroke-width: 16; fill: none; }
.cross { stroke: #f00; stroke-width: 8; fill: none; }
.pads rect { fill: #f00; }
.bandline { stroke: #f00; stroke-width: 4; fill: none; }
.silk path { fill: none; stroke: #ffcc00; stroke-width: 6.500; stroke-linecap: round; }
.silk.thin path { stroke-width: 5; stroke-linecap: butt; }
.silk-u { fill: none; stroke: #ffcc00; stroke-width: 4; }
.refdes text { font-family: "Liberation Sans", sans-serif; font-weight: 700; font-size: 33px; letter-spacing: 3px; fill: #ffcc00; }
.holetext text { font-family: "Liberation Sans", sans-serif; font-size: 20px; fill: #ddd; text-anchor: middle; }
.padtext text { font-family: "Liberation Sans", sans-serif; font-size: 12px; fill: #ffc4c4; text-anchor: middle; }
.padtext.big text { font-size: 27px; }

/* layer bar */
.layerbar { position: absolute; left: 36px; right: 3px; bottom: 0; height: 32px; background: #383838; display: flex; align-items: center; overflow: hidden; }
.nav { width: 80px; height: 30px; margin: 0 1px 0 0; border: 2px solid #2c2c2c; border-radius: 6px; background: #555; position: relative; flex: none; }
.nav::after { content: ""; position: absolute; left: 37px; top: 2px; width: 2px; height: 22px; background: #2a2a2a; }
.nl, .nr { position: absolute; top: 6px; width: 0; height: 0; border-top: 7px solid transparent; border-bottom: 7px solid transparent; }
.nl { left: 16px; border-right: 7px solid #ddd; }
.nr { right: 16px; border-left: 7px solid #ddd; }
.lt { height: 32px; flex: none; padding: 0 21px 0 11px; display: flex; align-items: center; color: #c8c8c8; background: #3c3c3c; white-space: nowrap; border-right: 1px solid #2c2c2c; }
.lt.on { background: #555; color: #fff; }
.lt i { width: 16px; height: 16px; border: 2px solid #aaa; margin-right: 9px; flex: none; }
.lt i.c-more { background: #bbb; }
.c-top { background: #f00; }
.c-bot { background: #00f; }
.c-ts { background: #ffcc00; }
.c-bs { background: #66cc33; }
.c-tm { background: #800080; }
.c-bm { background: #aa00ff; }
.c-tp { background: #808080; }
.c-bp { background: #800000; }
.c-ta { background: #33cc99; }
.c-ba { background: #5555ff; }
.c-bo { background: #ff00ff; }

/* right panel */
.right { width: 575px; flex: none; display: flex; flex-direction: column; }
.right-top { height: 815px; display: flex; flex: none; }
.lp { width: 518px; flex: none; border-right: 2px solid #ccc; padding-top: 16px; display: flex; flex-direction: column; }
.lp-head { height: 48px; display: flex; align-items: flex-start; }
.sel-set { width: 270px; height: 47px; margin-left: 21px; padding: 0 20px 0 10px; }
.reset { width: 91px; height: 42px; margin-left: 10px; border: 2px solid #ddd; background: #fff; color: #2090ff; font: inherit; padding: 0; }
.lp-gear { width: 32px; height: 32px; margin: 7px 0 0 77px; }
.lp-filter { height: 48px; flex: none; display: flex; align-items: center; padding: 0 0 3px 26px; }
.lp-filter b { color: #2090ff; }
.lp-filter i { width: 2px; height: 32px; background: #ddd; margin: 0 25px 0 22px; }
.lp-listwrap { display: flex; height: 703px; flex: none; }
.layers { width: 495px; height: 700px; overflow: hidden; flex: none; }
.row { height: 48px; display: flex; align-items: center; white-space: nowrap; color: #444; }
.row.act { background: #f9e8d5; }
.row > .sw { width: 71px; height: 48px; flex: none; display: flex; align-items: center; justify-content: center; }
.row > .eye { margin-left: 16px; margin-right: 17px; }
.nm { margin-top: -3px; }
.eye { width: 32px; height: 24px; flex: none; color: #111; }
.eye.off { color: #ccc; }
.row.grp { padding-left: 11px; }
.row.grp > .eye { margin-left: 25px; margin-right: 16px; }
.notri { width: 16px; flex: none; }
.tri-g { width: 0; height: 0; border-left: 16px solid transparent; border-bottom: 16px solid #ccc; margin-top: -2px; flex: none; }
.pencil { width: 32px; height: 32px; }
.lock { width: 33px; height: 33px; margin-left: auto; margin-right: 16px; flex: none; }
.scroll { width: 21px; height: 700px; background: #f4f4f4; position: relative; flex: none; }
.thumb { position: absolute; left: 2px; top: 19px; width: 18px; height: 330px; background: #bbb; }
.up, .down { position: absolute; left: 5px; width: 0; height: 0; border-left: 5px solid transparent; border-right: 5px solid transparent; }
.up { top: 7px; border-bottom: 5px solid #ccc; }
.down { bottom: 9px; border-top: 5px solid #ccc; }
.rtabs { width: 57px; flex: none; background: #eee; display: flex; flex-direction: column; }
.rpin { height: 65px; display: flex; align-items: center; justify-content: center; border-bottom: 2px solid #ccc; }
.rtab { width: 46px; height: 141px; border: 2px solid #ddd; border-left: 0; border-top: 0; writing-mode: vertical-rl; display: flex; align-items: center; justify-content: center; line-height: 46px; background: #eee; color: #333; letter-spacing: .5px; }
.rtab.on { background: #fff; color: #2090ff; font-weight: 700; border-color: #ccc; }
.status { height: 145px; flex: none; }
.st { height: 48px; background: #eee; border-top: 2px solid #ccc; display: flex; align-items: center; white-space: nowrap; color: #333; padding-bottom: 2px; }
.st .k { width: 76px; padding-left: 40px; flex: none; }
.st .v { width: 221px; flex: none; }
.st .k2 { width: 29px; margin-right: 21px; flex: none; text-align: right; }

/* splitter */
.hsplit {
  height: 12px; flex: none; position: relative; background-color: #e2e2e2;
  background-image: radial-gradient(circle, #cbcbcb 1.200px, transparent 1.600px); background-size: 6px 6px;
}
.hhandle { position: absolute; left: 1230px; top: 2px; width: 100px; height: 10px; border: 2px solid #7c6f6f; border-bottom: 0; background: #eee; }
.hhandle i { position: absolute; left: 41px; top: 0; width: 0; height: 0; border-left: 8px solid transparent; border-right: 8px solid transparent; border-top: 9px solid #7c6f6f; }

/* bottom */
.bottom { height: 342px; flex: none; background: #fff; }
.drcpanel { width: 422px; height: 342px; border-right: 2px solid #ddd; padding: 10px 0 0 11px; }
.drc-btns { display: flex; gap: 10px; }
.drc-btns button { width: 194px; height: 56px; background: #fff; border: 2px solid #d8d8d8; border-radius: 4px; color: #2090ff; font: inherit; padding: 0; }
.drc-list { width: 398px; height: 261px; margin-top: 10px; border: 2px solid #d4d4d4; padding: 0 0 0 7px; }
.drc-row { height: 44px; background: #e3f5ff; display: flex; align-items: center; color: #2090ff; padding-left: 42px; }
.eye.small { margin-right: 8px; }
.foot { flex: 1; background: #eee; border-top: 2px solid #ccc; display: flex; position: relative; }
.foot-pin { width: 69px; display: flex; align-items: center; justify-content: center; padding-right: 8px; }
.ft { width: 142px; height: 51px; display: flex; align-items: center; justify-content: center; border-left: 2px solid #d4d4d4; border-bottom: 3px solid #ccc; color: #333; flex: none; }
.ft.on { background: #fff; color: #2090ff; font-weight: 700; border: 0; height: 49px; margin-top: -2px; padding-bottom: 3px; }
.ft:last-child { border-right: 2px solid #d4d4d4; }
```
